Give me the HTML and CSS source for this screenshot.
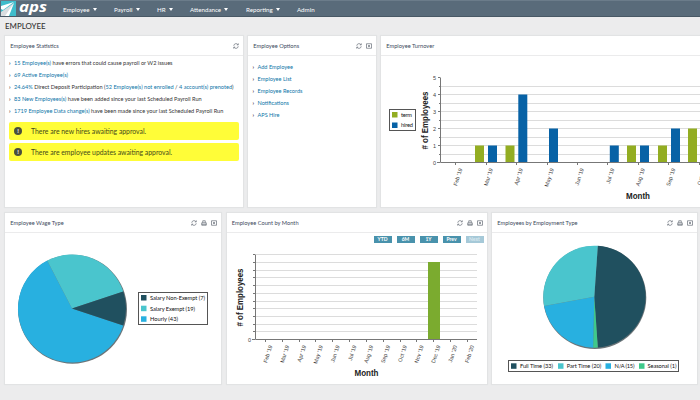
FILE: index.html
```html
<!DOCTYPE html>
<html lang="en">
<head>
    <meta charset="UTF-8">
    <meta name="viewport" content="width=device-width, initial-scale=1.0">
    <title>APS - Employee</title>
    <link rel="stylesheet" href="styles.css">
</head>
<body>
    <!-- shared icons -->
    <svg class="sprite">
        <symbol id="refresh" viewBox="0 0 12 12">
            <path d="M1.5 5.5A4.5 4.5 0 0 1 9.5 3M10.5 6.5A4.5 4.5 0 0 1 2.5 9"/>
            <path d="M10.6 .8V3.8H7.6M1.4 11.2V8.2H4.4"/>
        </symbol>
        <symbol id="print" viewBox="0 0 12 12">
            <path d="M3.5 5V1.5H8.5V5M1.5 5.5H10.5V10.5H1.5ZM1.5 8.5H10.5"/>
        </symbol>
        <symbol id="close" viewBox="0 0 12 12">
            <path d="M1 1.5H11V10.5H1ZM4 4L8 8M8 4L4 8"/>
        </symbol>
    </svg>

    <nav class="navbar">
        <svg class="logo" width="48" height="15" viewBox="0 0 48 15">
            <rect x="1" y="0" width="15" height="15" fill="#3fbccb"/>
            <path d="M1 5L14 1L3 9L1 8Z" fill="#fff"/>
            <path d="M1 15V11L14 2L7 15Z" fill="#d9dde0"/>
            <path d="M14 2L9 15H5Z" fill="#fff"/>
            <text class="logo-text" x="19" y="11" textLength="28" lengthAdjust="spacingAndGlyphs">aps</text>
        </svg>
        <ul class="menu">
            <li class="m-employee">Employee <span class="caret"></span></li>
            <li class="m-payroll">Payroll <span class="caret"></span></li>
            <li class="m-hr">HR <span class="caret"></span></li>
            <li class="m-attendance">Attendance <span class="caret"></span></li>
            <li class="m-reporting">Reporting <span class="caret"></span></li>
            <li>Admin</li>
        </ul>
    </nav>

    <h1>EMPLOYEE</h1>

    <div class="row row-top">
        <div class="card">
            <div class="card-header">
                <h2>Employee Statistics</h2>
                <svg class="icon"><use href="#refresh"/></svg>
            </div>
            <ul class="stats">
                <li><a>15 Employee(s)</a> have errors that could cause payroll or W2 issues</li>
                <li><a>69 Active Employee(s)</a></li>
                <li><a>24.64%</a> Direct Deposit Participation (<a>52 Employee(s) not enrolled</a> / <a>4 account(s) prenoted</a>)</li>
                <li><a>83 New Employees(s)</a> have been added since your last Scheduled Payroll Run</li>
                <li><a>1719 Employee Data change(s)</a> have been made since your last Scheduled Payroll Run</li>
            </ul>
            <div class="alert"><span class="alert-icon">!</span>There are new hires awaiting approval.</div>
            <div class="alert"><span class="alert-icon">!</span>There are employee updates awaiting approval.</div>
        </div>

        <div class="card">
            <div class="card-header">
                <h2>Employee Options</h2>
                <svg class="icon"><use href="#refresh"/></svg>
                <svg class="icon"><use href="#close"/></svg>
            </div>
            <ul class="stats options">
                <li><a>Add Employee</a></li>
                <li><a>Employee List</a></li>
                <li><a>Employee Records</a></li>
                <li><a>Notifications</a></li>
                <li><a>APS Hire</a></li>
            </ul>
        </div>

        <div class="card">
            <div class="card-header">
                <h2>Employee Turnover</h2>
            </div>
            <svg class="chart" width="319" height="151" viewBox="381 56 319 151">
                <path class="grid" d="M441 86.5H700M441 94.5H700M441 103.5H700M441 111.5H700M441 120.5H700M441 128.5H700M441 137.5H700M441 145.5H700M441 154.5H700"/>
                <g class="term">
                    <rect x="475" y="145.5" width="9" height="17"/>
                    <rect x="505.5" y="145.5" width="9" height="17"/>
                    <rect x="627" y="145.5" width="9" height="17"/>
                    <rect x="658" y="145.5" width="9" height="17"/>
                    <rect x="688" y="128.5" width="9" height="34"/>
                </g>
                <g class="hired">
                    <rect x="488" y="145.5" width="9" height="17"/>
                    <rect x="518.3" y="94.5" width="9" height="68"/>
                    <rect x="549" y="128.5" width="9" height="34"/>
                    <rect x="609.8" y="145.5" width="9" height="17"/>
                    <rect x="640" y="145.5" width="9" height="17"/>
                    <rect x="671" y="128.5" width="9" height="34"/>
                </g>
                <path class="axis" d="M440.5 77.5V162.5H700M438 77.5H440M438 94.5H440M438 111.5H440M438 128.5H440M438 145.5H440M437 162.5H440M439 86.5H440M439 103.5H440M439 120.5H440M439 137.5H440M439 154.5H440M455.5 162V165M486.5 162V165M516.5 162V165M547.5 162V165M577.5 162V165M607.5 162V165M638.5 162V165M668.5 162V165M699.5 162V165"/>
                <g class="ticks end">
                    <text x="436" y="79.5">5</text>
                    <text x="436" y="96.5">4</text>
                    <text x="436" y="113.5">3</text>
                    <text x="436" y="130.5">2</text>
                    <text x="436" y="147.5">1</text>
                    <text x="436" y="164.5">0</text>
                    <text transform="translate(462.5 169) rotate(-72)">Feb '19</text>
                    <text transform="translate(493 169) rotate(-72)">Mar '19</text>
                    <text transform="translate(523 169) rotate(-72)">Apr '19</text>
                    <text transform="translate(554 169) rotate(-72)">May '19</text>
                    <text transform="translate(584 169) rotate(-72)">Jun '19</text>
                    <text transform="translate(614.5 169) rotate(-72)">Jul '19</text>
                    <text transform="translate(645 169) rotate(-72)">Aug '19</text>
                    <text transform="translate(675.5 169) rotate(-72)">Sep '19</text>
                    <text transform="translate(706 169) rotate(-72)">Oct '19</text>
                </g>
                <text class="axis-title" transform="translate(428 149.5) rotate(-90)" textLength="58" lengthAdjust="spacingAndGlyphs">&#35; of Employees</text>
                <text class="axis-title" x="626" y="198.5" textLength="24" lengthAdjust="spacingAndGlyphs">Month</text>
                <rect class="legend-box" x="389.5" y="109.5" width="26" height="21"/>
                <rect class="term" x="392" y="112" width="5.5" height="5.5"/>
                <rect class="hired" x="392" y="122.5" width="5.5" height="5.5"/>
                <text class="legend" x="401" y="116.7" textLength="11">term</text>
                <text class="legend" x="401" y="127.4" textLength="12">hired</text>
            </svg>
        </div>
    </div>

    <div class="row row-bottom">
        <div class="card">
            <div class="card-header">
                <h2>Employee Wage Type</h2>
                <svg class="icon"><use href="#refresh"/></svg>
                <svg class="icon"><use href="#print"/></svg>
                <svg class="icon"><use href="#close"/></svg>
            </div>
            <svg class="chart" width="216" height="151" viewBox="5 233 216 151">
                <circle class="pie-shadow" cx="72.5" cy="309.2" r="54.5"/>
                <path class="blue" d="M72 308.5L123.3 325.4A54 54 0 1 1 47.2 260.6Z"/>
                <path class="teal" d="M72 308.5L47.2 260.6A54 54 0 0 1 123.3 291.6Z"/>
                <path class="navy" d="M72 308.5L123.3 291.6A54 54 0 0 1 123.3 325.4Z"/>
                <rect class="legend-box" x="138.5" y="292.5" width="69" height="32"/>
                <rect class="navy" x="141" y="295" width="5.5" height="5.5"/>
                <rect class="teal" x="141" y="305.7" width="5.5" height="5.5"/>
                <rect class="blue" x="141" y="316.3" width="5.5" height="5.5"/>
                <text class="legend" x="150" y="300" textLength="55">Salary Non-Exempt (7)</text>
                <text class="legend" x="150" y="310.7" textLength="45">Salary Exempt (19)</text>
                <text class="legend" x="150" y="321.3" textLength="28">Hourly (43)</text>
            </svg>
        </div>

        <div class="card">
            <div class="card-header">
                <h2>Employee Count by Month</h2>
                <svg class="icon"><use href="#refresh"/></svg>
                <svg class="icon"><use href="#print"/></svg>
                <svg class="icon"><use href="#close"/></svg>
            </div>
            <div class="buttons">
                <span class="btn">YTD</span>
                <span class="btn">6M</span>
                <span class="btn">1Y</span>
                <span class="btn">Prev</span>
                <span class="btn btn-disabled">Next</span>
            </div>
            <svg class="chart" width="260" height="141" viewBox="227 243 260 141">
                <path class="grid" d="M256 254.5H477M256 262.5H477M256 270.5H477M256 277.5H477M256 285.5H477M256 293.5H477M256 301.5H477M256 308.5H477M256 316.5H477M256 324.5H477M256 331.5H477"/>
                <rect class="green" x="428" y="262" width="12" height="77"/>
                <path class="axis" d="M255.5 254.5V339.5H477M253 254.5H255M253 262.5H255M253 270.5H255M253 277.5H255M253 285.5H255M253 293.5H255M253 301.5H255M253 308.5H255M253 316.5H255M253 324.5H255M253 331.5H255M252 339.5H255M265.5 339V342M282.5 339V342M299.5 339V342M315.5 339V342M332.5 339V342M349.5 339V342M366.5 339V342M383.5 339V342M400.5 339V342M416.5 339V342M433.5 339V342M450.5 339V342M467.5 339V342"/>
                <g class="ticks end">
                    <text x="251" y="341.5">0</text>
                    <text transform="translate(272.5 346) rotate(-72)">Feb '19</text>
                    <text transform="translate(289.3 346) rotate(-72)">Mar '19</text>
                    <text transform="translate(306.1 346) rotate(-72)">Apr '19</text>
                    <text transform="translate(322.9 346) rotate(-72)">May '19</text>
                    <text transform="translate(339.7 346) rotate(-72)">Jun '19</text>
                    <text transform="translate(356.5 346) rotate(-72)">Jul '19</text>
                    <text transform="translate(373.3 346) rotate(-72)">Aug '19</text>
                    <text transform="translate(390.1 346) rotate(-72)">Sep '19</text>
                    <text transform="translate(406.9 346) rotate(-72)">Oct '19</text>
                    <text transform="translate(423.7 346) rotate(-72)">Nov '19</text>
                    <text transform="translate(440.5 346) rotate(-72)">Dec '19</text>
                    <text transform="translate(457.3 346) rotate(-72)">Jan '20</text>
                    <text transform="translate(474.1 346) rotate(-72)">Feb '20</text>
                </g>
                <text class="axis-title" transform="translate(243 326.5) rotate(-90)" textLength="58" lengthAdjust="spacingAndGlyphs">&#35; of Employees</text>
                <text class="axis-title" x="354.5" y="375.5" textLength="24" lengthAdjust="spacingAndGlyphs">Month</text>
            </svg>
        </div>

        <div class="card">
            <div class="card-header">
                <h2>Employees by Employment Type</h2>
                <svg class="icon"><use href="#refresh"/></svg>
                <svg class="icon"><use href="#print"/></svg>
                <svg class="icon"><use href="#close"/></svg>
            </div>
            <svg class="chart" width="205" height="151" viewBox="492 233 205 151">
                <circle class="pie-shadow" cx="594.8" cy="297.4" r="51.5"/>
                <path class="navy" d="M594.3 296.7L597.8 245.8A51 51 0 0 1 597.8 347.6Z"/>
                <path class="mint" d="M594.3 296.7L597.8 347.6A51 51 0 0 1 593.1 347.7Z"/>
                <path class="blue" d="M594.3 296.7L593.1 347.7A51 51 0 0 1 544.1 305.9Z"/>
                <path class="teal" d="M594.3 296.7L544.1 305.9A51 51 0 0 1 597.8 245.8Z"/>
                <rect class="legend-box" x="508.5" y="360.5" width="170" height="11"/>
                <rect class="navy" x="511" y="363.3" width="5.5" height="5.5"/>
                <rect class="teal" x="558" y="363.3" width="5.5" height="5.5"/>
                <rect class="blue" x="605.5" y="363.3" width="5.5" height="5.5"/>
                <rect class="mint" x="639" y="363.3" width="5.5" height="5.5"/>
                <text class="legend" x="520" y="368.2" textLength="33">Full Time (33)</text>
                <text class="legend" x="566.7" y="368.2" textLength="34.5">Part Time (20)</text>
                <text class="legend" x="614.5" y="368.2" textLength="20">N/A (15)</text>
                <text class="legend" x="647.5" y="368.2" textLength="29">Seasonal (1)</text>
            </svg>
        </div>
    </div>
</body>
</html>
```
FILE: styles.css
```css
body {
    margin: 0;
    width: 700px;
    height: 400px;
    overflow: hidden;
    background-color: #ececed;
    font-family: Lato, "Noto Sans", sans-serif;
    font-size: 5.6px;
    color: #333;
}
ul {
    list-style: none;
    margin: 0;
    padding: 0;
}
.sprite {
    display: none;
}
.navbar {
    display: flex;
    align-items: center;
    box-sizing: border-box;
    height: 17px;
    background-color: #596b7a;
    border-top: 1px solid #6b7c8a;
    border-bottom: 1px solid #485865;
}
.logo {
    overflow: visible;
}
.logo-text {
    font: italic bold 14px "Open Sans", sans-serif;
    fill: #fff;
}
.menu {
    display: flex;
    margin-left: 15px;
    color: #fff;
    font-size: 6.2px;
    line-height: 15px;
}
.menu li {
    display: flex;
    align-items: center;
    justify-content: space-between;
    padding-top: 1px;
    white-space: nowrap;
}
.m-employee {
    width: 34px;
    margin-right: 17px;
}
.m-payroll {
    width: 26px;
    margin-right: 17px;
}
.m-hr {
    width: 16px;
    margin-right: 17px;
}
.m-attendance {
    width: 38px;
    margin-right: 18px;
}
.m-reporting {
    width: 34px;
    margin-right: 17px;
}
.caret {
    border-left: 2.5px solid transparent;
    border-right: 2.5px solid transparent;
    border-top: 3px solid #fff;
}
h1 {
    margin: 0;
    padding-left: 5px;
    height: 19px;
    line-height: 18px;
    font-size: 7.9px;
    font-weight: 500;
    color: #333;
}
.row {
    display: grid;
    column-gap: 5px;
    padding-left: 5px;
}
.row-top {
    grid-template-columns: 238px 128px 319px;
    height: 171px;
    margin-bottom: 6px;
}
.row-bottom {
    grid-template-columns: 216px 260px 205px;
    column-gap: 5.5px;
    height: 171px;
}
.card {
    background-color: #fff;
    box-shadow: 0 0 1px 1px #e2e3e4;
    min-width: 0;
}
.card-header {
    display: flex;
    align-items: center;
    gap: 4px;
    box-sizing: border-box;
    height: 20px;
    padding: 0 4px 0 5.3px;
    border-bottom: 1px solid #ebebec;
}
.card-header h2 {
    flex: 1;
    margin: 0;
    font-size: 5.7px;
    font-weight: normal;
    color: #3d4a5c;
    white-space: nowrap;
}
.icon {
    width: 6px;
    height: 6px;
    fill: none;
    stroke: #3c4652;
    stroke-width: 1.1;
}
.stats {
    padding: 1px 0 0 4px;
    margin-bottom: 5px;
}
.stats li {
    height: 12px;
    line-height: 12px;
    white-space: nowrap;
}
.stats li::before {
    content: "›";
    display: inline-block;
    width: 5px;
    font-weight: bold;
}
.stats a {
    color: #0e75a8;
}
.options {
    padding: 5px 0 0 4.5px;
}
.alert {
    display: flex;
    align-items: center;
    height: 18px;
    margin: 0 4px 3px;
    border-radius: 2px;
    background-color: #fffd38;
    font-size: 6.85px;
    color: #444a1a;
}
.alert-icon {
    width: 8px;
    height: 8px;
    margin: 0 9px 0 5px;
    border-radius: 50%;
    background-color: #4a4f3c;
    color: #fff;
    font-size: 6px;
    font-weight: bold;
    line-height: 8px;
    text-align: center;
}
.chart {
    display: block;
}
.grid {
    stroke: #dcdcdc;
}
.axis {
    fill: none;
    stroke: #777;
}
.ticks {
    font: 5.5px "Liberation Sans", sans-serif;
    fill: #444;
}
.end {
    text-anchor: end;
}
.axis-title {
    font: bold 8.5px "Liberation Sans", sans-serif;
    fill: #222;
}
.legend {
    font-size: 5.7px;
    fill: #111;
}
.legend-box {
    fill: #fff;
    stroke: #555;
}
.term {
    fill: #93ad22;
}
.hired {
    fill: #0762a6;
}
.green {
    fill: #7bab2f;
}
.navy {
    fill: #20505f;
}
.teal {
    fill: #4ac5cd;
}
.blue {
    fill: #28b0e0;
}
.mint {
    fill: #3fc98a;
}
.pie-shadow {
    fill: #6b7478;
}
.buttons {
    display: flex;
    justify-content: flex-end;
    gap: 5px;
    height: 7px;
    padding: 3px 3px 0 0;
}
.btn {
    width: 18px;
    height: 7px;
    background-color: #4992ac;
    color: #fff;
    font-size: 5px;
    font-weight: bold;
    line-height: 7px;
    text-align: center;
}
.btn-disabled {
    background-color: #a6c9d8;
    color: #d8e8ef;
}
```
